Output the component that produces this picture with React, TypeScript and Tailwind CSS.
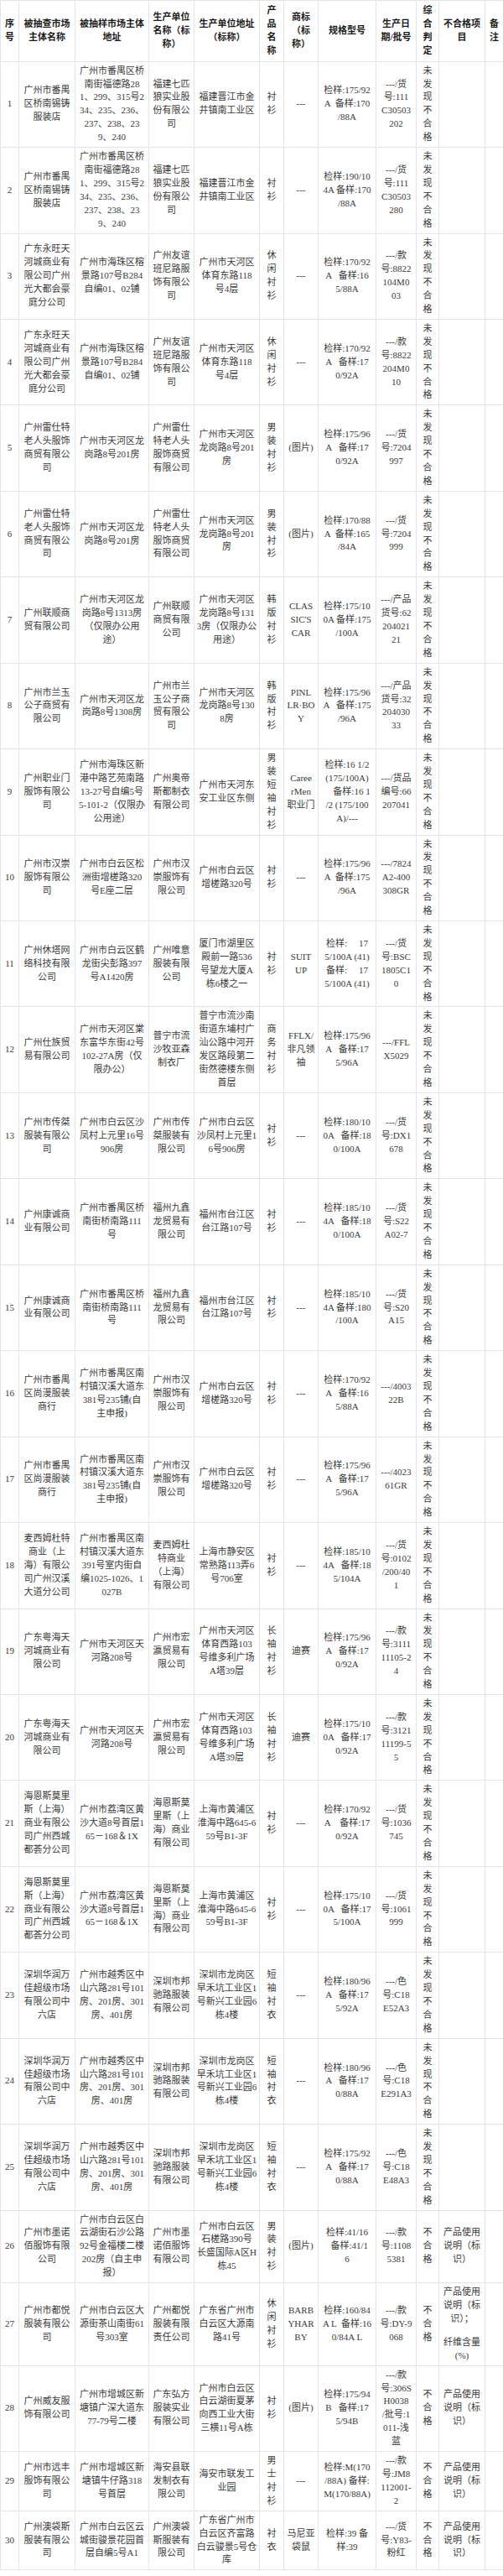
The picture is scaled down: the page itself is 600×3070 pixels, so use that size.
import React from "react"

// columns: 序号, 被抽查市场主体名称, 被抽样市场主体地址, 生产单位名称, 生产单位地址, 产品名称, 商标, 规格型号, 生产日期/批号, 综合判定, 不合格项目, 备注
const colWidths = [
  "w-[22px]",
  "w-[67px]",
  "w-[88px]",
  "w-[54px]",
  "w-[78px]",
  "w-[29px]",
  "w-[41px]",
  "w-[69px]",
  "w-[48px]",
  "w-[27px]",
  "w-[55px]",
  "w-[22px]",
]

const header = [
  "序|号",
  "被抽查市场|主体名称",
  "被抽样市场主体|地址",
  "生产单位|名称（标|称）",
  "生产单位地址|（标称）",
  "产|品|名|称",
  "商标|（标|称）",
  "规格型号",
  "生产日|期/批号",
  "综|合|判|定",
  "不合格项|目",
  "备|注",
]

const OK = "未|发|现|不|合|格"
const NG = "不|合|格"
const LABEL = "产品使用|说明（标|识）"

const rows: string[][] = [
  ["1", "广州市番禺|区桥南锡铸|服装店", "广州市番禺区桥|南街福德路28|1、299、315号2|34、235、236、|237、238、23|9、240", "福建七匹|狼实业股|份有限公|司", "福建晋江市金|井镇南工业区", "衬|衫", "---", "检样:175/92|A  备样:170|/88A", "---/货|号:111|C30503|202", OK, "", ""],
  ["2", "广州市番禺|区桥南锡铸|服装店", "广州市番禺区桥|南街福德路28|1、299、315号2|34、235、236、|237、238、23|9、240", "福建七匹|狼实业股|份有限公|司", "福建晋江市金|井镇南工业区", "衬|衫", "---", "检样:190/10|4A 备样:170|/88A", "---/货|号:111|C30503|280", OK, "", ""],
  ["3", "广东永旺天|河城商业有|限公司广州|光大都会豪|庭分公司", "广州市海珠区榕|景路107号B284|自编01、02铺", "广州友谊|班尼路服|饰有限公|司", "广州市天河区|体育东路118|号4层", "休|闲|衬|衫", "---", "检样:170/92|A   备样:16|5/88A", "---/款|号:8822|104M0|03", OK, "", ""],
  ["4", "广东永旺天|河城商业有|限公司广州|光大都会豪|庭分公司", "广州市海珠区榕|景路107号B284|自编01、02铺", "广州友谊|班尼路服|饰有限公|司", "广州市天河区|体育东路118|号4层", "休|闲|衬|衫", "---", "检样:170/92|A   备样:17|0/92A", "---/款|号:8822|204M0|10", OK, "", ""],
  ["5", "广州雷仕特|老人头服饰|商贸有限公|司", "广州市天河区龙|岗路8号201房", "广州雷仕|特老人头|服饰商贸|有限公司", "广州市天河区|龙岗路8号201|房", "男|装|衬|衫", "(图片)", "检样:175/96|A   备样:17|0/92A", "---/货|号:7204|997", OK, "", ""],
  ["6", "广州雷仕特|老人头服饰|商贸有限公|司", "广州市天河区龙|岗路8号201房", "广州雷仕|特老人头|服饰商贸|有限公司", "广州市天河区|龙岗路8号201|房", "男|装|衬|衫", "(图片)", "检样:170/88|A  备样:165|/84A", "---/货|号:7204|999", OK, "", ""],
  ["7", "广州联顺商|贸有限公司", "广州市天河区龙|岗路8号1313房|（仅限办公用|途）", "广州联顺|商贸有限|公司", "广州市天河区|龙岗路8号131|3房（仅限办公|用途）", "韩|版|衬|衫", "CLAS|SIC'S|CAR", "检样:175/10|0A 备样:175|/100A", "---/产品|货号:62|204021|21", OK, "", ""],
  ["8", "广州市兰玉|公子商贸有|限公司", "广州市天河区龙|岗路8号1308房", "广州市兰|玉公子商|贸有限公|司", "广州市天河区|龙岗路8号130|8房", "韩|版|衬|衫", "PINL|LR·BO|Y", "检样:175/96|A   备样:175|/96A", "---/产品|货号:32|204030|33", OK, "", ""],
  ["9", "广州职业门|服饰有限公|司", "广州市海珠区新|港中路艺苑南路|13-27号自编5号|5-101-2（仅限办|公用途）", "广州奥帝|斯都制衣|有限公司", "广州市天河东|安工业区东侧", "男|装|短|袖|衬|衫", "Caree|rMen|职业门", "检样:16 1/2|(175/100A)|    备样:16 1|/2 (175/100|A)/---", "---/货品|编号:66|207041", OK, "", ""],
  ["10", "广州市汉崇|服饰有限公|司", "广州市白云区松|洲街增槎路320|号E座二层", "广州市汉|崇服饰有|限公司", "广州市白云区|增槎路320号", "衬|衫", "---", "检样:175/96|A  备样:175|/96A", "---/7824|A2-400|308GR", OK, "", ""],
  ["11", "广州休塔网|络科技有限|公司", "广州市白云区鹤|龙街尖彭路397|号A1420房", "广州唯意|服装有限|公司", "厦门市湖里区|殿前一路536|号望龙大厦A|栋6楼之一", "衬|衫", "SUIT|UP", "检样:     17|5/100A (41)|备样:     17|5/100A (41)", "---/货|号:BSC|1805C1|0", OK, "", ""],
  ["12", "广州仕族贸|易有限公司", "广州市天河区棠|东富华东街42号|102-27A房（仅|限办公）", "普宁市流|沙牧亚森|制衣厂", "普宁市流沙南|街道东埔村广|汕公路中河开|发区路段第二|街然德楼东侧|首层", "商|务|衬|衫", "FFLX/|非凡领|袖", "检样:175/96|A   备样:17|5/96A", "---/FFL|X5029", OK, "", ""],
  ["13", "广州市传桀|服装有限公|司", "广州市白云区沙|凤村上元里16号|906房", "广州市传|桀服装有|限公司", "广州市白云区|沙凤村上元里1|6号906房", "衬|衫", "---", "检样:180/10|0A   备样:18|0/100A", "---/货|号:DX1|678", OK, "", ""],
  ["14", "广州康诚商|业有限公司", "广州市番禺区桥|南街桥南路111|号", "福州九鑫|龙贸易有|限公司", "福州市台江区|台江路107号", "衬|衫", "---", "检样:185/10|4A   备样:18|0/100A", "---/货|号:S22|A02-7", OK, "", ""],
  ["15", "广州康诚商|业有限公司", "广州市番禺区桥|南街桥南路111|号", "福州九鑫|龙贸易有|限公司", "福州市台江区|台江路107号", "衬|衫", "---", "检样:185/10|4A 备样:180|/100A", "---/货|号:S20|A15", OK, "", ""],
  ["16", "广州市番禺|区尚漫服装|商行", "广州市番禺区南|村镇汉溪大道东|381号235铺(自|主申报)", "广州市汉|崇服饰有|限公司", "广州市白云区|增槎路320号", "衬|衫", "---", "检样:170/92|A   备样:16|5/88A", "---/4003|22B", OK, "", ""],
  ["17", "广州市番禺|区尚漫服装|商行", "广州市番禺区南|村镇汉溪大道东|381号235铺(自|主申报)", "广州市汉|崇服饰有|限公司", "广州市白云区|增槎路320号", "衬|衫", "---", "检样:175/96|A   备样:17|5/96A", "---/4023|61GR", OK, "", ""],
  ["18", "麦西姆杜特|商业（上|海）有限公|司广州汉溪|大道分公司", "广州市番禺区南|村镇汉溪大道东|391号室内街自|编1025-1026、1|027B", "麦西姆杜|特商业|（上海）|有限公司", "上海市静安区|常熟路113弄6|号706室", "衬|衫", "---", "检样:185/10|4A   备样:18|5/104A", "---/货|号:0102|/200/40|1", OK, "", ""],
  ["19", "广东粤海天|河城商业有|限公司", "广州市天河区天|河路208号", "广州市宏|瀛贸易有|限公司", "广州市天河区|体育西路103|号维多利广场|A塔39层", "长|袖|衬|衫", "迪赛", "检样:175/96|A   备样:17|0/92A", "---/款|号:3111|11105-2|4", OK, "", ""],
  ["20", "广东粤海天|河城商业有|限公司", "广州市天河区天|河路208号", "广州市宏|瀛贸易有|限公司", "广州市天河区|体育西路103|号维多利广场|A塔39层", "长|袖|衬|衫", "迪赛", "检样:175/10|0A   备样:17|0/92A", "---/款|号:3121|11199-5|5", OK, "", ""],
  ["21", "海恩斯莫里|斯（上海）|商业有限公|司广州西城|都荟分公司", "广州市荔湾区黄|沙大道8号首层1|65－168＆1X", "海恩斯莫|里斯（上|海）商业|有限公司", "上海市黄浦区|淮海中路645-6|59号B1-3F", "衬|衫", "---", "检样:170/92|A    备样:17|0/92A", "---/货|号:1036|745", OK, "", ""],
  ["22", "海恩斯莫里|斯（上海）|商业有限公|司广州西城|都荟分公司", "广州市荔湾区黄|沙大道8号首层1|65－168＆1X", "海恩斯莫|里斯（上|海）商业|有限公司", "上海市黄浦区|淮海中路645-6|59号B1-3F", "衬|衫", "---", "检样:175/10|0A   备样:17|5/100A", "---/货|号:1061|999", OK, "", ""],
  ["23", "深圳华润万|佳超级市场|有限公司中|六店", "广州市越秀区中|山六路281号101|房、201房、301|房、401房", "深圳市邦|驰路服装|有限公司", "深圳市龙岗区|早禾坑工业区1|号新兴工业园6|栋4楼", "短|袖|衬|衣", "---", "检样:180/96|A   备样:17|5/92A", "---/色|号:C18|E52A3", OK, "", ""],
  ["24", "深圳华润万|佳超级市场|有限公司中|六店", "广州市越秀区中|山六路281号101|房、201房、301|房、401房", "深圳市邦|驰路服装|有限公司", "深圳市龙岗区|早禾坑工业区1|号新兴工业园6|栋4楼", "短|袖|衬|衣", "---", "检样:180/96|A   备样:17|0/88A", "---/色|号:C18|E291A3", OK, "", ""],
  ["25", "深圳华润万|佳超级市场|有限公司中|六店", "广州市越秀区中|山六路281号101|房、201房、301|房、401房", "深圳市邦|驰路服装|有限公司", "深圳市龙岗区|早禾坑工业区1|号新兴工业园6|栋4楼", "短|袖|衬|衣", "---", "检样:175/92|A   备样:17|0/88A", "---/色|号:C18|E48A3", OK, "", ""],
  ["26", "广州市墨诺|佰服饰有限|公司", "广州市白云区白|云湖街石沙公路|92号金福楼二楼|202房（自主申|报）", "广州市墨|诺佰服饰|有限公司", "广州市白云区|石槎路390号|长盛国际A区H|栋45", "男|装|衬|衫", "(图片)", "检样:41/16|  备样:41/1|6", "---/款|号:1108|5381", NG, LABEL, ""],
  ["27", "广州市都悦|服装有限公|司", "广州市白云区大|源街茶山南街61|号303室", "广州都悦|服装有限|责任公司", "广东省广州市|白云区大源南|路41号", "休|闲|衬|衫", "BARB|YHAR|BY", "检样:160/84|A L  备样:16|0/84A L", "---/款|号:DY-9|068", NG, "产品使用|说明（标|识）；||纤维含量|(%)", ""],
  ["28", "广州威友服|饰有限公司", "广州市增城区新|塘镇广深大道东|77-79号二楼", "广东弘方|服装实业|有限公司", "广州市白云区|白云湖街夏茅|向西工业大街|三横11号A栋", "衬|衫", "(图片)", "检样:175/94|B   备样:17|5/94B", "---/款|号:306S|H0038|/批号:1|011-浅|蓝", NG, LABEL, ""],
  ["29", "广州市远丰|服饰有限公|司", "广州市增城区新|塘镇牛仔路318|号首层", "海安县联|发制衣有|限公司", "海安市联发工|业园", "男|士|衬|衫", "---", "检样:M(170|/88A) 备样:|M(170/88A)", "---/款|号:JM8|112001-|2", NG, LABEL, ""],
  ["30", "广州澳袋斯|服装有限公|司", "广州市白云区云|城街骏景花园首|层自编5号A1", "广州澳袋|斯服装有|限公司", "广东省广州市|白云区齐富路|白云骏景5号仓|库", "衬|衣", "马尼亚|袋鼠", "检样:39 备|样:39", "---/货|号:Y83-|粉红", NG, LABEL, ""],
]

function Lines({ text }: { text: string }) {
  if (!text) return null
  return (
    <>
      {text.split("|").map((line, i) =>
        line === "" ? (
          <div key={i} className="h-[12px]" />
        ) : (
          <div key={i} className="whitespace-pre">
            {line}
          </div>
        )
      )}
    </>
  )
}

export default function App() {
  return (
    <div className="w-[600px] bg-white font-['Liberation_Serif','Noto_Sans_CJK_SC',serif]">
      <table className="w-[600px] table-fixed border-collapse text-[11px] leading-[15.9px]">
        <colgroup>
          {colWidths.map((w, i) => (
            <col key={i} className={w} />
          ))}
        </colgroup>
        <thead>
          <tr>
            {header.map((h, i) => (
              <th
                key={i}
                className="border border-[#e4e4e4] px-0 py-[4px] text-center align-middle font-bold text-[#1a1a1a]"
              >
                <Lines text={h} />
              </th>
            ))}
          </tr>
        </thead>
        <tbody>
          {rows.map((row, r) => (
            <tr key={r}>
              {row.map((cell, c) => (
                <td
                  key={c}
                  className="border border-[#e4e4e4] px-0 py-[3px] text-center align-middle text-[#3a3a3a]"
                >
                  <Lines text={cell} />
                </td>
              ))}
            </tr>
          ))}
        </tbody>
      </table>
    </div>
  )
}
